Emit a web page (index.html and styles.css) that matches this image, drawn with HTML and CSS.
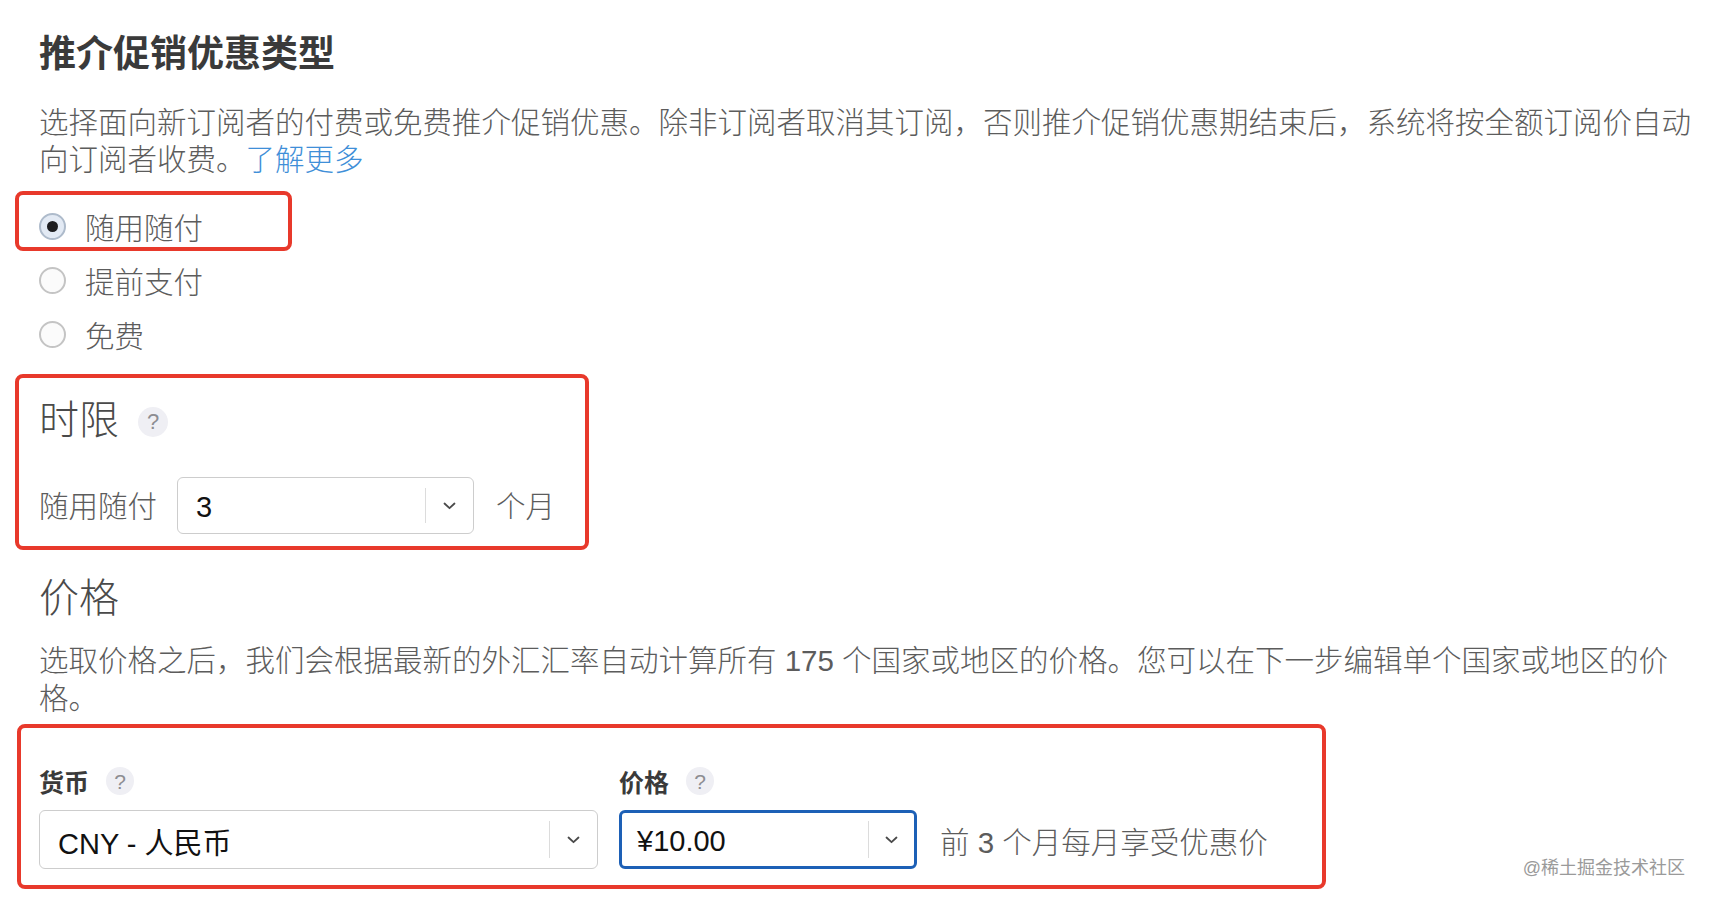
FILE: index.html
```html
<!DOCTYPE html>
<html lang="zh-CN">
  <head>
    <meta charset="UTF-8" />
    <meta name="viewport" content="width=device-width, initial-scale=1.0" />
    <title>推介促销优惠类型</title>
    <link rel="stylesheet" href="styles.css">
  </head>
  <body>
    <main class="page">
      <h1 class="title">推介促销优惠类型</h1>
      <p class="desc">选择面向新订阅者的付费或免费推介促销优惠。除非订阅者取消其订阅，否则推介促销优惠期结束后，系统将按全额订阅价自动向订阅者收费。<a href="#" class="link">了解更多</a></p>

      <div class="mark mark-type">
        <label class="radio"><span class="dot checked"></span>随用随付</label>
      </div>
      <label class="radio radio-second"><span class="dot"></span>提前支付</label>
      <label class="radio radio-third"><span class="dot"></span>免费</label>

      <section class="mark mark-duration">
        <h2 class="heading">时限<span class="help help-big">?</span></h2>
        <div class="field-row">
          <span class="row-label">随用随付</span>
          <div class="select select-duration">
            <span class="value">3</span>
            <span class="arrow">
              <svg width="13" height="8" viewBox="0 0 13 8"><path d="M1.5 1.5 L6.5 6.2 L11.5 1.5" fill="none" stroke="#4a4a4a" stroke-width="1.8" stroke-linecap="round" stroke-linejoin="round"/></svg>
            </span>
          </div>
          <span class="unit">个月</span>
        </div>
      </section>

      <h2 class="heading heading-price">价格</h2>
      <p class="desc desc-price">选取价格之后，我们会根据最新的外汇汇率自动计算所有 175 个国家或地区的价格。您可以在下一步编辑单个国家或地区的价格。</p>

      <section class="mark mark-price">
        <div class="price-grid">
          <div class="field">
            <div class="field-label">货币<span class="help">?</span></div>
            <div class="select select-currency">
              <span class="value">CNY - 人民币</span>
              <span class="arrow">
                <svg width="13" height="8" viewBox="0 0 13 8"><path d="M1.5 1.5 L6.5 6.2 L11.5 1.5" fill="none" stroke="#4a4a4a" stroke-width="1.8" stroke-linecap="round" stroke-linejoin="round"/></svg>
              </span>
            </div>
          </div>
          <div class="field">
            <div class="field-label">价格<span class="help">?</span></div>
            <div class="select select-amount">
              <span class="value">¥10.00</span>
              <span class="arrow">
                <svg width="13" height="8" viewBox="0 0 13 8"><path d="M1.5 1.5 L6.5 6.2 L11.5 1.5" fill="none" stroke="#4a4a4a" stroke-width="1.8" stroke-linecap="round" stroke-linejoin="round"/></svg>
              </span>
            </div>
          </div>
          <span class="hint">前 3 个月每月享受优惠价</span>
        </div>
      </section>
    </main>
    <div class="watermark">@稀土掘金技术社区</div>
  </body>
</html>
```

FILE: styles.css
```css
body {
  margin: 0;
  background-color: #fff;
  font-family: "Liberation Sans", "Noto Sans CJK SC", sans-serif;
  color: #5c5c5c;
  position: relative;
  height: 904px;
  overflow: hidden;
}

.page {
  width: 1655px;
  padding: 33px 0 0 39px;
}

.title {
  margin: 0;
  font-size: 37px;
  line-height: 44px;
  font-weight: 700;
  color: #3a3a3a;
}

.desc {
  margin: 27px 0 0;
  font-size: 29.5px;
  line-height: 37px;
  font-weight: 300;
  color: #5c5c5c;
}

.link {
  display: inline-block;
  line-height: 37px;
  color: #3f8fd8;
  text-decoration: none;
}

/* red highlight boxes */
.mark {
  border: 4px solid #e8392b;
  border-radius: 8px;
  margin-left: -24px;
  padding-left: 20px;
}

.mark-type {
  width: 249px;
  margin-top: 13px;
  padding-top: 10px;
}

.radio {
  display: flex;
  align-items: center;
  gap: 19px;
  height: 42px;
  font-size: 29.5px;
  font-weight: 300;
  color: #5c5c5c;
}

.radio-second {
  margin-top: 8px;
}

.radio-third {
  margin-top: 12px;
}

.dot {
  width: 27px;
  height: 27px;
  box-sizing: border-box;
  border-radius: 50%;
  border: 2px solid #c4c4c4;
  background-color: #fbfbfb;
  display: flex;
  align-items: center;
  justify-content: center;
  flex-shrink: 0;
}

.dot.checked {
  border-color: #aebbcb;
  background-color: #e3eaf4;
}

.dot.checked::after {
  content: "";
  width: 11px;
  height: 11px;
  border-radius: 50%;
  background-color: #1d1d1f;
}

.mark-duration {
  width: 546px;
  margin-top: 19px;
  padding-top: 18px;
  padding-bottom: 12px;
}

.heading {
  margin: 0;
  display: flex;
  align-items: center;
  font-size: 40px;
  line-height: 48px;
  font-weight: 300;
  color: #4a4a4a;
}

.heading-price {
  margin-top: 24px;
}

.desc-price {
  margin-top: 20px;
  line-height: 37.5px;
}

.help {
  display: inline-flex;
  align-items: center;
  justify-content: center;
  width: 28px;
  height: 28px;
  margin-left: 17px;
  border-radius: 50%;
  background-color: #efeff4;
  color: #8d8d92;
  font-size: 21px;
  font-weight: 400;
  line-height: 1;
}

.help-big {
  width: 30px;
  height: 30px;
  margin-left: 19px;
  margin-top: 4px;
  font-size: 22px;
}

.field-row {
  display: flex;
  align-items: center;
  margin-top: 33px;
}

.row-label {
  font-size: 29.5px;
  font-weight: 300;
  color: #5c5c5c;
  width: 138px;
  margin-top: -3px;
}

.unit {
  margin-left: 22px;
  margin-top: -3px;
  font-size: 29.5px;
  font-weight: 300;
  color: #5c5c5c;
}

.select {
  display: flex;
  align-items: stretch;
  box-sizing: border-box;
  border: 1px solid #cdcdcd;
  border-radius: 6px;
  background-color: #fff;
  color: #111;
  font-size: 29px;
}

.select .value {
  flex: 1;
  display: flex;
  align-items: center;
  padding-left: 18px;
  padding-top: 3px;
}

.select .arrow {
  width: 47px;
  margin: 10px 0;
  border-left: 1px solid #dcdcdc;
  display: flex;
  align-items: center;
  justify-content: center;
}

.select-duration {
  width: 297px;
  height: 57px;
}

.mark-price {
  width: 1283px;
  margin-left: -22px;
  padding-left: 18px;
  margin-top: 7px;
  padding-top: 38px;
  padding-bottom: 16px;
}

.price-grid {
  display: flex;
  align-items: flex-end;
  gap: 21px;
}

.field-label {
  display: flex;
  align-items: center;
  height: 30px;
  font-size: 25px;
  font-weight: 700;
  color: #3a3a3a;
  margin-bottom: 14px;
}

.select-currency {
  width: 559px;
  height: 59px;
}

.select-amount {
  width: 298px;
  height: 59px;
  border: 3px solid #1d60b6;
}

.select-amount .value {
  padding-left: 15px;
}

.select-amount .arrow {
  width: 45px;
  margin: 8px 0;
}

.hint {
  height: 59px;
  display: flex;
  align-items: center;
  margin-left: 2px;
  margin-top: -3px;
  font-size: 29.5px;
  font-weight: 300;
  color: #5c5c5c;
}

.watermark {
  position: absolute;
  right: 25px;
  top: 857px;
  font-size: 18px;
  line-height: 22px;
  color: #9a9a9a;
}
```
